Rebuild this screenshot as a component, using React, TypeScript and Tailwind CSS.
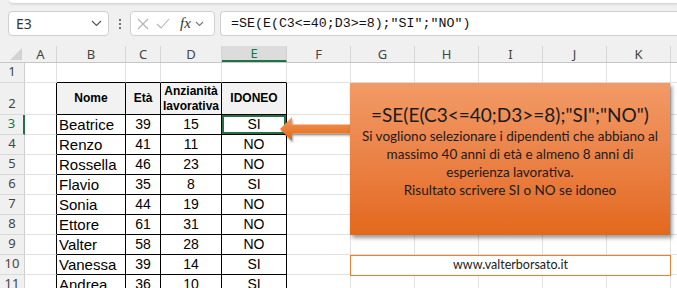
import React from 'react';

const COLS: { key: string; w: string }[] = [
    { key: 'A', w: 'w-[32px]' },
    { key: 'B', w: 'w-[69px]' },
    { key: 'C', w: 'w-[35px]' },
    { key: 'D', w: 'w-[61px]' },
    { key: 'E', w: 'w-[65px]' },
    { key: 'F', w: 'w-[64px]' },
    { key: 'G', w: 'w-[64px]' },
    { key: 'H', w: 'w-[64px]' },
    { key: 'I', w: 'w-[64px]' },
    { key: 'J', w: 'w-[64px]' },
    { key: 'K', w: 'w-[64px]' },
];

const PEOPLE: [string, number, number, string][] = [
    ['Beatrice', 39, 15, 'SI'],
    ['Renzo', 41, 11, 'NO'],
    ['Rossella', 46, 23, 'NO'],
    ['Flavio', 35, 8, 'SI'],
    ['Sonia', 44, 19, 'NO'],
    ['Ettore', 61, 31, 'NO'],
    ['Valter', 58, 28, 'NO'],
    ['Vanessa', 39, 14, 'SI'],
    ['Andrea', 36, 10, 'SI'],
];

const uiFont = "font-['Noto_Sans',sans-serif]";
const cellFont = "font-['Liberation_Sans',Arial,sans-serif]";
const shapeFont = "font-['Lato','Open_Sans',sans-serif]";

const FormulaBar: React.FC = () => (
    <div className="h-[46px] relative">
        <div className="absolute left-[9px] right-0 top-0 h-[4px] bg-white rounded-bl-[6px] border-b border-[#d6d6d6] shadow-[0_1px_2px_rgba(0,0,0,0.08)]" />
        <div className="flex items-center pt-[11px] h-[36px]">
            <div className={`ml-[8px] w-[101px] h-[25px] bg-white border border-[#cfcfcf] rounded-[4px] flex items-center justify-between pl-[7px] pr-[6px] ${uiFont} text-[14px] text-[#333]`}>
                <span>E3</span>
                <svg width="11" height="7" viewBox="0 0 11 7" fill="none" stroke="#555" strokeWidth="1.2"><path d="M1 1l4.5 4.5L10 1" /></svg>
            </div>
            <div className="w-[21px] flex flex-col items-center gap-[2px]">
                <span className="w-[2px] h-[2px] bg-[#444] rounded-full" />
                <span className="w-[2px] h-[2px] bg-[#444] rounded-full" />
                <span className="w-[2px] h-[2px] bg-[#444] rounded-full" />
            </div>
            <div className="w-[85px] h-[25px] bg-white border border-[#cfcfcf] rounded-[4px] flex items-center pl-[6px] gap-[7px]">
                <svg width="12" height="12" viewBox="0 0 12 12" stroke="#b4b4b4" strokeWidth="1.1"><path d="M1 1l10 10M11 1L1 11" /></svg>
                <svg width="14" height="11" viewBox="0 0 14 11" fill="none" stroke="#b4b4b4" strokeWidth="1.1"><path d="M1 6l4 4 8-9" /></svg>
                <span className="ml-[3px] font-['Liberation_Serif',serif] italic text-[15px] text-[#333] leading-none">fx</span>
                <svg width="9" height="6" viewBox="0 0 9 6" fill="none" stroke="#777" strokeWidth="1.1" className="-ml-[3px]"><path d="M1 1l3.5 3.5L8 1" /></svg>
            </div>
            <div className="ml-[5px] flex-1 h-[25px] bg-white border border-r-0 border-[#cfcfcf] rounded-l-[4px] flex items-center pl-[10px] font-['Liberation_Mono',monospace] text-[13.3px] text-[#111] whitespace-nowrap">
                =SE(E(C3&lt;=40;D3&gt;=8);"SI";"NO")
            </div>
        </div>
    </div>
);

const cellBorder = (row: number, col: string) => {
    const inTable = row >= 2 && ['B', 'C', 'D', 'E'].includes(col);
    const leftOfTable = row >= 2 && col === 'A';
    const aboveTable = row === 1 && ['B', 'C', 'D', 'E'].includes(col);
    const r = inTable || leftOfTable ? 'border-r-black' : 'border-r-[#e1e1e1]';
    const b = inTable || aboveTable ? 'border-b-black' : 'border-b-[#e1e1e1]';
    return `border-r border-b ${r} ${b}`;
};

const Row: React.FC<{ n: number; h: string; cells?: Record<string, React.ReactNode> }> = ({ n, h, cells = {} }) => (
    <div className={`flex ${h}`}>
        <div className={`w-[25px] shrink-0 bg-[#f0f0f0] border-b border-[#d9d9d9] flex items-end justify-center pb-[1px] ${uiFont} text-[13px] ${n === 3 ? 'text-[#217346] border-r-2 border-r-[#217346]' : 'text-[#444] border-r border-r-[#cfcfcf]'}`}>
            {n}
        </div>
        {COLS.map(c => (
            <div key={c.key} className={`${c.w} shrink-0 ${cellBorder(n, c.key)} ${n === 2 && ['B', 'C', 'D', 'E'].includes(c.key) ? 'bg-[#f2f2f2]' : 'bg-white'} ${n === 3 && c.key === 'E' ? 'shadow-[inset_0_0_0_2px_#217346]' : ''} flex ${cellFont} text-black`}>
                {cells[c.key]}
            </div>
        ))}
        <div className="flex-1 bg-white border-b border-[#e1e1e1]" />
    </div>
);

const Num: React.FC<{ children: React.ReactNode }> = ({ children }) => (
    <span className="w-full text-center self-end text-[14px] leading-[19px]">{children}</span>
);

const Head: React.FC<{ children: React.ReactNode }> = ({ children }) => (
    <span className="w-full self-center text-center font-bold text-[12px] leading-[15px]">{children}</span>
);

const App: React.FC = () => {
    return (
        <div className="w-[677px] h-[288px] overflow-hidden bg-[#f0f0f0] relative">
            <FormulaBar />

            {/* column headers */}
            <div className={`flex h-[17px] border-b border-[#c6c6c6] ${uiFont} text-[13px]`}>
                <div className="w-[25px] shrink-0 flex items-end justify-end pr-[3px] pb-[2px]">
                    <div className="w-0 h-0 border-l-[12px] border-l-transparent border-b-[12px] border-b-[#d2d2d2]" />
                </div>
                {COLS.map(c => (
                    <div key={c.key} className={`${c.w} shrink-0 flex items-center justify-center border-r ${c.key === 'E' ? 'bg-[#dcdcdc] border-b-2 border-b-[#217346] text-[#217346] border-r-[#d0d0d0]' : 'border-r-[#d6d6d6] text-[#444]'} leading-none`}>
                        {c.key}
                    </div>
                ))}
                <div className="flex-1" />
            </div>

            <Row n={1} h="h-[20px]" />
            <Row
                n={2}
                h="h-[32px]"
                cells={{
                    B: <Head>Nome</Head>,
                    C: <Head>Età</Head>,
                    D: <Head>Anzianità<br />lavorativa</Head>,
                    E: <Head>IDONEO</Head>,
                }}
            />
            {PEOPLE.map(([name, age, years, ok], i) => (
                <Row
                    key={name}
                    n={i + 3}
                    h="h-[20px]"
                    cells={{
                        B: <span className="self-end pl-[2px] text-[15px] leading-[19px]">{name}</span>,
                        C: <Num>{age}</Num>,
                        D: <Num>{years}</Num>,
                        E: <Num>{ok}</Num>,
                    }}
                />
            ))}

            {/* arrow shape */}
            <svg className="absolute left-[279px] top-[115px]" width="74" height="28" viewBox="0 0 74 28">
                <defs>
                    <linearGradient id="arr" x1="0" y1="0" x2="0" y2="1">
                        <stop offset="0" stopColor="#f59b62" />
                        <stop offset="1" stopColor="#e0650f" />
                    </linearGradient>
                    <filter id="sh" x="-10%" y="-30%" width="130%" height="180%">
                        <feDropShadow dx="1" dy="2" stdDeviation="1.2" floodColor="#000" floodOpacity="0.35" />
                    </filter>
                </defs>
                <path d="M1 14 L13 2 L13 9.5 L74 9.5 L74 18.5 L13 18.5 L13 26 Z" fill="url(#arr)" filter="url(#sh)" />
            </svg>

            {/* callout shape */}
            <div className={`absolute left-[350px] top-[83px] w-[320px] h-[152px] bg-gradient-to-b from-[#f29a66] to-[#e3681a] shadow-[2px_3px_4px_rgba(0,0,0,0.4)] pt-[20px] text-center text-[#1b1b1b] ${shapeFont} whitespace-nowrap`}>
                <div className="text-[19px] leading-[24px]">=SE(E(C3&lt;=40;D3&gt;=8);"SI";"NO")</div>
                <div className="text-[13.5px] leading-[18px]">
                    Si vogliono selezionare i dipendenti che abbiano al<br />
                    massimo 40 anni di età e almeno 8 anni di<br />
                    esperienza lavorativa.<br />
                    Risultato scrivere SI o NO se idoneo
                </div>
            </div>

            {/* url text box */}
            <div className={`absolute left-[350px] top-[255px] w-[321px] h-[21px] border border-[#ed7d31] bg-white flex items-center justify-center ${shapeFont} text-[12.5px] text-[#222]`}>
                www.valterborsato.it
            </div>
        </div>
    );
};

export default App;
